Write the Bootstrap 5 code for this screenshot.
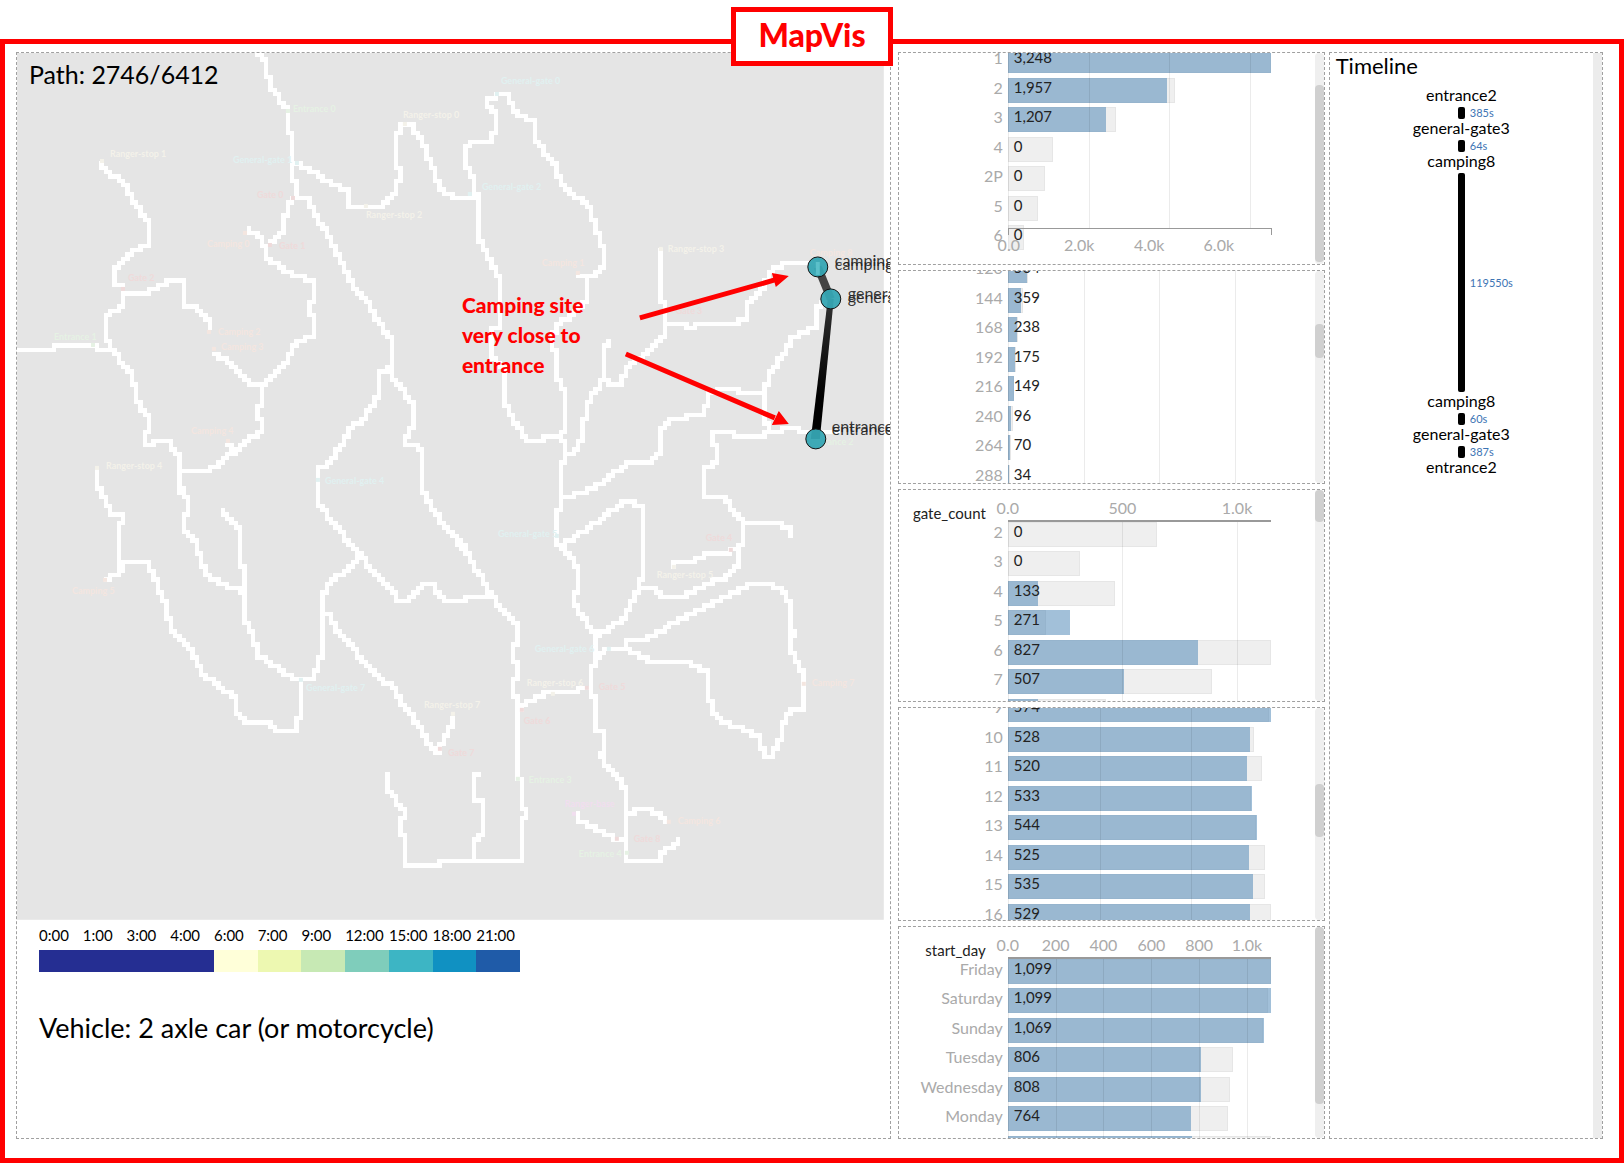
<!DOCTYPE html>
<html lang="en">
<head>
<meta charset="utf-8">
<meta name="viewport" content="width=device-width, initial-scale=1">
<title>MapVis</title>
<link rel="stylesheet" href="https://cdn.jsdelivr.net/npm/bootstrap@5.3.0/dist/css/bootstrap.min.css">
<style>
  body { font-family: Lato, "Open Sans", sans-serif; color: #000; background: #fff; }
  .frame { border: 5px solid #f00; margin-top: 39px; padding: 8px 16px 19px 11px; min-height: calc(100vh - 39px); }
  .frame-title { top: 7px; left: 50%; transform: translateX(-50%); width: 162px; height: 59px; border: 5px solid #f00;
    background: #fff; color: #f00; font: 900 32px/46px Lato, sans-serif; z-index: 5; }
  .pane { border: 1px dashed #a0a0a0; min-width: 0; position: relative; overflow: hidden; }
  .pane-map { flex: 875 1 0; margin-right: 7px; }
  .col-charts { flex: 428 1 0; min-width: 0; gap: 5px; margin-right: 4px; }
  .pane-time { flex: 273 1 0; }
  .time-body { padding-right: 9px; }
  .pane-chart { flex: 1 1 0; min-height: 0; }

  .map-svg { display: block; width: 100%; height: auto; overflow: visible; }
  .map-svg .place { font-size: 9px; font-weight: 700; }
  .map-svg .stop { font-size: 16px; fill: #222; fill-opacity: .9; }
  .map-svg .note { font: 900 21px Lato, sans-serif; fill: #f00; }
  .map-svg .path-no { font-size: 25px; }
  .legend-block { padding: 6px 22px 0; }
  .hours { max-width: 481px; }
  .hour { flex: 1; font-size: 15px; line-height: 19px; }
  .hour i { display: block; height: 22px; margin-top: 5px; }
  .vehicle { font-size: 27px; line-height: 32px; margin: 40px 0 70px; }

  .name-col { width: 109px; flex: none; padding-right: 5px; text-align: right; color: #aaa; }
  .axis-name { color: #222; padding: 14px 22px 0 0; font-size: 15px; line-height: 18px; }
  .chart-end { width: 53px; flex: none; }
  .chart-head { height: 32px; font-size: 16px; line-height: 19px; }
  .axis { flex: 1; position: relative; border-bottom: 2px solid #999; }
  .axis span, .foot-axis span { position: absolute; top: 8px; transform: translateX(-50%); color: #aaa; }
  .foot-axis span { top: 6px; }
  .bars { height: 295px; display: flex; flex-direction: column; font-size: 16px; line-height: 19px; }
  .bars.up-s { margin-top: -5px; } .bars.up-m { margin-top: -11px; } .bars.up-l { margin-top: -13px; }
  .bar-row { flex: 1; display: flex; min-height: 0; }
  .track { flex: 1; display: grid; height: 25px; }
  .track > * { grid-area: 1 / 1; }
  .track .all { background: #efefef; border: 1px solid #e6e6e6; }
  .track .sel { background: steelblue; opacity: .5; }
  .track .num { padding-left: 6px; color: #222; font-size: 15px; z-index: 1; }
  .lines { position: absolute; inset: 0 53px 0 109px; pointer-events: none; }
  .lines.below { top: 32px; } .lines.above { bottom: 36px; }
  .lines i { position: absolute; top: 0; bottom: 0; width: 1px; background: rgba(0,0,0,.08); }
  .foot-axis { position: absolute; left: 109px; right: 52px; bottom: 29px; height: 7px; border: 1px solid #999; border-bottom: 0; font-size: 16px; line-height: 19px; }
  .scroller { position: absolute; top: 0; right: 0; bottom: 0; width: 9px; border-radius: 4px; background: #efefef; }
  .scroller i { position: absolute; left: 0; width: 9px; border-radius: 4px; background: #d0d0d0; }
  .scroller.plain { border-radius: 0; background: #ececec; }

  .time-title { font-size: 22px; line-height: 26px; padding: 0 6px; margin: 0 0 7px; font-weight: 400; }
  .stop-name { font-size: 16px; line-height: 18px; text-align: center; }
  .leg { display: grid; grid-template-columns: 1fr 7px 1fr; height: 12px; margin-top: 3px; align-items: center; }
  .leg i { height: 12px; background: #000; border-radius: 2px; grid-column: 2; }
  .leg.long, .leg.long i { height: 219px; }
  .leg span { font-size: 11px; line-height: 12px; padding-left: 5px; color: #3d74b4; }
</style>
<script src="https://cdn.jsdelivr.net/npm/bootstrap@5.3.0/dist/js/bootstrap.bundle.min.js"></script>
</head>
<body class="position-relative">
<h1 class="frame-title position-absolute text-center m-0">MapVis</h1>
<main class="frame d-flex align-items-stretch">

  <section class="pane pane-map">
    <svg class="map-svg" viewBox="0 0 873 867" role="img" aria-label="Park map with the selected path">
      <defs><linearGradient id="legShade" x1="0" y1="0" x2="0" y2="1"><stop offset="0" stop-color="#333"/><stop offset=".7" stop-color="#000"/></linearGradient></defs>
      <rect width="867" height="867" fill="#e5e5e5"/>
      <path id="roads" transform="scale(4.335)" fill="#fff" shape-rendering="crispEdges"/>
      <g id="places"></g>
      <text class="path-no" x="12" y="31">Path: 2746/6412</text>
      <path d="M801 214L814 246" stroke="#444" stroke-width="8"/>
      <path d="M811 246h6L803 386h-9z" fill="url(#legShade)"/>
      <g fill="#35a5b3" fill-opacity=".95" stroke="#111" stroke-width="1">
        <circle cx="801" cy="214" r="10"/><circle cx="814" cy="246" r="10"/><circle cx="799" cy="386" r="10"/>
      </g>
      <path d="M801 209v13" stroke="#5bc0ca" stroke-width="4"/>
      <g class="stop">
        <text x="818" y="213">camping8</text><text x="818" y="217">camping8</text>
        <text x="831" y="246">general-gate3</text><text x="831" y="250">general-gate3</text>
        <text x="815" y="379">entrance2</text><text x="815" y="382">entrance2</text>
      </g>
      <g class="note">
        <text x="445" y="260">Camping site</text><text x="445" y="290">very close to</text><text x="445" y="320">entrance</text>
      </g>
      <g stroke="#f00" stroke-width="5"><path d="M623 265L758 227M609 301L758 365"/></g>
      <path d="M755 220L772 223L759 234zM762 358L772 371L755 372z" fill="#f00"/>
    </svg>
    <div class="legend-block">
      <div class="hours d-flex" id="hours"></div>
      <p class="vehicle">Vehicle: 2 axle car (or motorcycle)</p>
    </div>
  </section>

  <div class="col-charts d-flex flex-column" id="charts"></div>

  <section class="pane pane-time">
    <div class="time-body">
      <h2 class="time-title">Timeline</h2>
      <div class="stop-name">entrance2</div>
      <div class="leg"><i></i><span>385s</span></div>
      <div class="stop-name">general-gate3</div>
      <div class="leg"><i></i><span>64s</span></div>
      <div class="stop-name">camping8</div>
      <div class="leg long"><i></i><span>119550s</span></div>
      <div class="stop-name">camping8</div>
      <div class="leg"><i></i><span>60s</span></div>
      <div class="stop-name">general-gate3</div>
      <div class="leg"><i></i><span>387s</span></div>
      <div class="stop-name">entrance2</div>
    </div>
    <div class="scroller plain"></div>
  </section>
</main>

<script>
/* Colour key: start hour of each band */
const hours = [['0:00','#252e92'],['1:00','#252e92'],['3:00','#252e92'],['4:00','#252e92'],['6:00','#ffffd9'],['7:00','#edf8b1'],
  ['9:00','#c7e9b4'],['12:00','#7fcdbb'],['15:00','#3db5c4'],['18:00','#1091c2'],['21:00','#1f5ba8']];
document.getElementById('hours').innerHTML = hours.map(([h, c]) => `<div class="hour">${h}<i style="background:${c}"></i></div>`).join('');

/* Charts: rows are [name, value, selected %, total %] */
const charts = [
  { up: 'up-s', foot: [['0.0',0],['2.0k',26.9],['4.0k',53.6],['6.0k',80.2]], grid: [0,30.8,61.4,92.3], thumb: [15,84],
    rows: [['1','3,248',100,100],['2','1,957',60.4,63.5],['3','1,207',37.3,41.2],['4','0',0,17.3],['2P','0',0,14],['5','0',0,11.6],['6','0',0,6]] },
  { up: 'up-l', grid: [0,28.9,57.5,86.3], thumb: [25,16],
    rows: [['120','504',7.3,7.6],['144','359',5.2,5.6],['168','238',3.5,3.9],['192','175',2.6,3],['216','149',2.2,2.5],['240','96',1.4,1.8],['264','70',1,1.4],['288','34',.5,.8]] },
  { name: 'gate_count', head: [['0.0',0],['500',43.6],['1.0k',87.2]], grid: [0,43.6,87.2], thumb: [0,15],
    rows: [['2','0',0,56.6],['3','0',0,27.6],['4','133',11.6,40.9],['5','271',23.7,14.4],['6','827',72.2,100],['7','507',44.3,77.5],['8','132',11.6,37.3]] },
  { up: 'up-m', grid: [0,34.9,69.8], thumb: [36,25],
    rows: [['9','574',100,99.4],['10','528',92,93.8],['11','520',90.8,96.8],['12','533',92.8,92.5],['13','544',94.8,94.3],['14','525',91.6,97.8],['15','535',93.3,97.8],['16','529',92.2,100]] },
  { name: 'start_day', head: [['0.0',0],['200',18.2],['400',36.4],['600',54.6],['800',72.8],['1.0k',91]], grid: [0,18.2,36.4,54.6,72.8,91], thumb: [0,84],
    rows: [['Friday','1,099',100,100],['Saturday','1,099',100,98.8],['Sunday','1,069',97.3,97],['Tuesday','806',73.4,85.8],['Wednesday','808',73.6,84.7],['Monday','764',69.6,83.6],['Thursday','767',70,100]] }
];
const ticks = t => t.map(([s, p]) => `<span style="left:${p}%">${s}</span>`).join('');
document.getElementById('charts').innerHTML = charts.map(c => {
  const rows = c.rows.concat(Array(10 - c.rows.length).fill(null));
  return `<section class="pane pane-chart">
    ${c.head ? `<div class="chart-head d-flex"><div class="name-col axis-name">${c.name}</div><div class="axis">${ticks(c.head)}</div><div class="chart-end"></div></div>` : ''}
    <div class="bars ${c.up || ''}">${rows.map(r => r ? `<div class="bar-row"><div class="name-col">${r[0]}</div>
      <div class="track"><div class="all" style="width:${r[3]}%"></div><div class="sel" style="width:${r[2]}%"></div><span class="num">${r[1]}</span></div>
      <div class="chart-end"></div></div>` : '<div class="bar-row"></div>').join('')}</div>
    <div class="lines ${c.head ? 'below' : ''} ${c.foot ? 'above' : ''}">${c.grid.map(p => `<i style="left:${p}%"></i>`).join('')}</div>
    ${c.foot ? `<div class="foot-axis">${ticks(c.foot)}</div>` : ''}
    <div class="scroller"><i style="top:${c.thumb[0]}%;height:${c.thumb[1]}%"></i></div></section>`;
}).join('');

/* Road network: four survey sheets, coordinates in thirds of a map unit; a road cell is 13 wide on a 200 x 200 grid */
const sheets = [
 { ox: -51, oy: -159, roads: [
  [774,165,800,190,810,270,858,330,864,400,877,410,877,535,890,560,890,595,915,600,965,690,1020,780,1060,870,1110,920,1120,960,1175,1020,1175,1090,1165,1115,1140,1130,1130,1190,1085,1265,1045,1285,1030,1330,985,1395,955,1405,955,1515],
  [1165,1115,1240,1215,1240,1270,1215,1330,1255,1335,1268,1360,1268,1465,1290,1530,1340,1600,1390,1655],
  [890,490,950,535,1020,568,1046,568,1046,619,1135,619,1190,565,1200,520,1190,490,1190,410,1205,372,1230,372,1265,425,1300,530,1330,575,1375,597,1400,595],
  [52,1049,165,1049,165,1036,280,1036,290,1049,328,1049,400,1130,420,1230,445,1260,447,1295,435,1310,435,1335,460,1335,460,1322,495,1322,538,1380,538,1480],
  [538,1415,600,1413,650,1390,785,1280,787,1255,773,1250,773,1215,787,1210,787,1155,760,1153,680,1075,645,1060],
  [790,1155,865,1070,870,1030,940,998,940,950,930,940,930,905,940,900,940,835,860,810,800,760,790,710,740,688],
  [810,720,850,680,865,610,880,600],[685,1335,700,1350],
  [328,1049,316,1000,316,945,370,905,370,880,435,880,500,842,545,842,552,915,575,918,628,970,628,985],
  [370,855,343,855,343,800,400,745,445,720,447,660,400,600,380,550,305,490]]},
 { ox: 1269, oy: -159, roads: [
  [35,595,80,595,100,582,103,530,80,490,80,450,90,424,140,424,170,385,170,335,145,310,145,290,170,283,195,283,230,345,285,375,290,425,350,500,365,550,455,635,460,690,480,715,492,770,492,800,470,827,415,827],
  [440,830,435,900,405,950,350,990,338,1010,338,1045,350,1060,352,1135,376,1180,376,1290,363,1309],
  [103,582,117,590,117,710,145,770,180,845,182,980,160,1000,157,1070,193,1120,193,1215,262,1320,300,1318,310,1309,363,1309,376,1340,376,1385,363,1400],
  [376,1360,402,1358,430,1310,440,1200,490,1125,493,1035,506,1022],
  [495,1125,506,1153,545,1153,560,1105,640,1030,675,995,675,910,664,905,664,755],
  [675,970,740,972,745,985,765,985,770,972,875,972,920,940,925,900,975,855,990,810,1030,790,1135,790],
  [1170,900,1132,915,1132,980,1050,1025,1040,1065,980,1130,977,1180,977,1250,990,1297],
  [977,1180,900,1180,895,1167,845,1167,805,1195,790,1240,700,1260,665,1290,655,1355,630,1385,570,1390,490,1450,440,1475,370,1493],
  [1190,1300,1090,1300,1080,1284,1040,1284,1030,1297,985,1297,975,1310,885,1310,880,1300,820,1300,820,1340,833,1350,830,1385,795,1415]]},
 { ox: -51, oy: 1221, roads: [
  [538,90,560,120,565,160,552,170,552,215,595,250,605,310,630,355,675,385,735,400],
  [955,135,1010,200,1070,275,1120,340,1190,415,1190,425,1230,425,1230,405,1270,373,1295,373,1315,415,1325,425,1395,425,1400,412,1465,412],
  [1070,290,1055,320,985,390,968,410,968,595,955,605,945,655,905,660,850,630,770,585,757,520,735,480,735,320,720,315,720,205,670,150],
  [904,660,903,770,890,780,890,815,840,815,805,790,745,790,710,750,705,710,600,635,560,550,510,500,500,440,445,310,385,310,365,323,357,345,320,358],
  [357,345,357,190,370,185,370,165,345,160,292,75,292,30],
  [975,465,1020,530,1120,640,1190,700,1210,750,1260,810,1290,865,1307,880,1358,785,1358,770],
  [1320,1206,1315,1219,1225,1219,1213,1205,1213,1130,1203,1120,1203,1075,1213,1070,1213,1045,1165,985,1165,940]]},
 { ox: 1269, oy: 1221, roads: [
  [5,200,70,270,120,340,150,405,195,465,235,505,235,540,220,560,220,605,233,610,233,655,220,660,220,710,233,715,233,955,247,960,247,1045,260,1050,260,1075,247,1080,247,1206,0,1206],
  [115,945,103,960,103,1024,128,1024,128,1125,103,1155,103,1206],
  [363,5,363,155,352,165,352,255,363,270,400,310,415,340,415,395,402,400,402,425,430,470,455,515,468,525,468,580,480,590,455,635,455,710,468,715,468,815,490,820,490,870,480,885,500,935,545,965,558,990,558,1206,665,1206,665,1180,715,1140],
  [795,30,795,113,845,115,895,170,908,190,1015,190,1050,215,1055,230],
  [908,190,908,255,895,270,895,320,860,355,800,365,740,410,665,412,650,387,600,387],
  [895,268,873,268,865,280,800,285,765,305,703,308,703,320],
  [363,255,440,205,550,127,570,127,605,150,610,350,600,385,560,470,485,530],
  [480,580,493,567,558,567,558,543,605,540,740,465,890,390,940,373,990,373,1040,410,1053,440,1055,510,1067,530,1055,545,1055,580,1090,650,1092,750,1040,765,1030,820,1000,893,977,893,963,830,900,800,835,773,820,740,807,710,807,633,745,610,650,605,565,570],
  [440,685,415,698,340,700,300,715,250,750],
  [415,1062,415,1085,520,1138,555,1138],[565,1062,585,1050,625,1050,680,1085]]}
];
const cells = new Set();
for (const s of sheets) for (const r of s.roads) {
  const p = [];
  for (let i = 0; i < r.length; i += 2) p.push([Math.floor((r[i] + s.ox) / 13), Math.floor((r[i + 1] + s.oy) / 13)]);
  for (let i = 1; i < p.length; i++) {
    let [x, y] = p[i - 1]; const [X, Y] = p[i];
    const dx = Math.abs(X - x), dy = Math.abs(Y - y), sx = X > x ? 1 : -1, sy = Y > y ? 1 : -1;
    let e = dx - dy; cells.add(x + ' ' + y);
    while (x !== X || y !== Y) {
      const e2 = 2 * e;
      if (e2 > -dy) { e -= dy; x += sx; cells.add(x + ' ' + y); }
      if (e2 < dx) { e += dx; y += sy; cells.add(x + ' ' + y); }
    }
  }
}
document.getElementById('roads').setAttribute('d', [...cells].map(c => `M${c}h1v1h-1z`).join(''));

/* Sensor places: [name, label x, baseline, marker x, marker y] in map units; colour by kind */
const kinds = { Ra: '#f4f2ea', Ga: '#efdada', Ca: '#f4e6e0', En: '#e6f2e4', Ge: '#e1f1f1' };
const places = [
 ['Entrance 0',276,59,271,58],['Ranger-stop 0',386,65,388,71],['Ranger-stop 1',93,104,85,108],['General-gate 1',216,110,280,110],
 ['Gate 0',240,145,276,145],['Ranger-stop 2',349,165,349,153],['Camping 0',190,194,228,180],['Gate 1',262,196,253,192],
 ['Gate 2',111,228,106,236],['Entrance 1',37,287,76,292],['Camping 2',201,282,192,279],['Camping 3',204,297,197,296],
 ['Camping 4',174,381,211,388],['Ranger-stop 4',89,416,80,415],['General-gate 0',484,31,480,41],['General-gate 2',465,137,453,141],
 ['Camping 1',525,213,561,220],['Ranger-stop 3',651,199,644,196],['Camping  8',793,203,801,210],['Gate 3',659,261,650,257],
 ['General-gate 4',308,431,301,427],['General-gate 7',289,638,284,627],['Camping 5',55,541,88,527],['Ranger-stop  7',407,655,436,661],
 ['General-gate 5',481,484,540,483],['Gate 4',689,488,714,497],['Ranger-stop 5',640,525,657,514],['General-gate 6',518,599,592,596],
 ['Ranger-stop 6',510,633,536,641],['Gate 5',582,637,570,635],['Gate 6',507,671,505,657],['Camping  7',795,633,787,631],
 ['Gate 7',431,703,423,696],['Entrance 3',512,730,501,726],['Ranger-base',548,754,557,761],['Camping 6',661,771,652,769],
 ['Gate 8',617,789,600,786],['Entrance 4',562,804,610,800],['Entrance 2',794,392,801,388]];
document.getElementById('places').innerHTML = places.map(([n, x, y, a, b]) => {
  const c = n === 'Ranger-base' ? '#f1deef' : kinds[n.slice(0, 2)];
  return `<rect x="${a - 2}" y="${b - 2}" width="4" height="4" fill="${c}"/><text class="place" x="${x}" y="${y}" fill="${c}">${n}</text>`;
}).join('');
</script>
</body>
</html>
